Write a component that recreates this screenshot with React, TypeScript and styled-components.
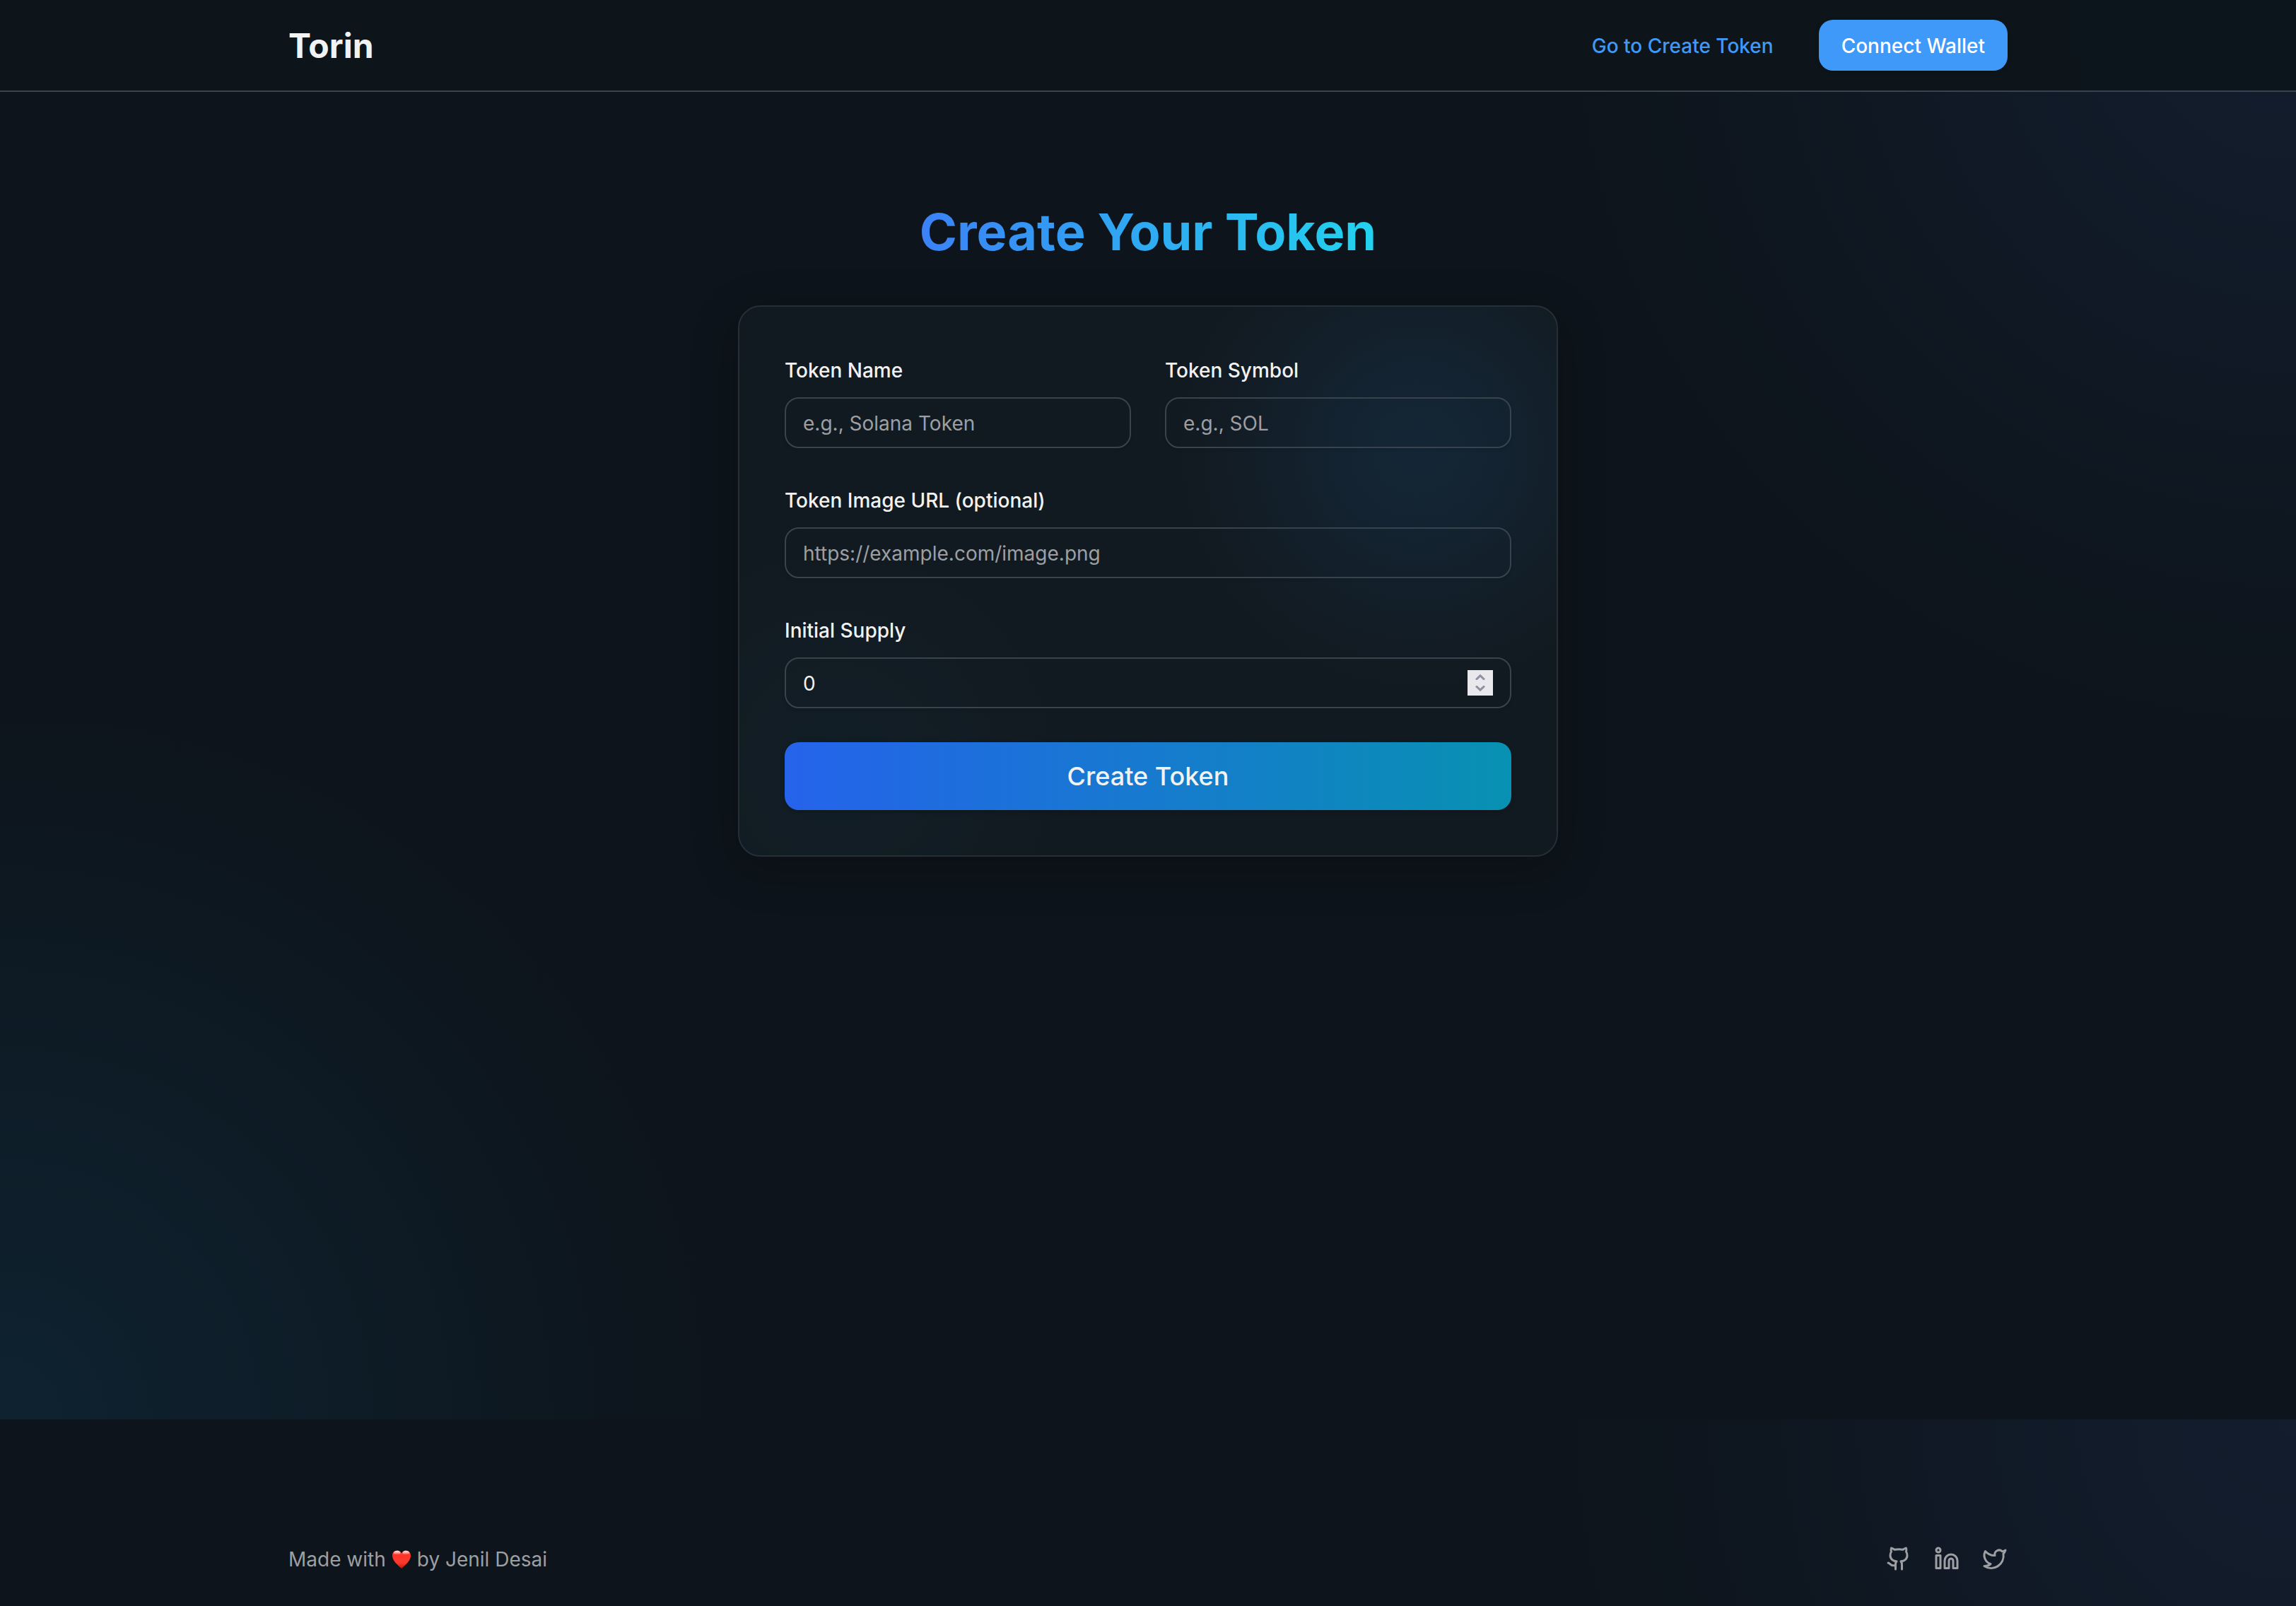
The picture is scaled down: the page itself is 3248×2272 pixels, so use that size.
import React, { useState } from "react";
import styled, { createGlobalStyle } from "styled-components";
import { Github, Linkedin, Twitter } from "lucide-react";

const color = {
  base: "#0d141b",
  text: "#f2f2f2",
  muted: "#9d9fa2",
  line: "#39434d",
  accent: "#3f99f8",
};

const cornerGlow =
  "radial-gradient(circle 1040px at 100% 0, rgba(75, 120, 235, 0.09), rgba(75, 120, 235, 0))";

const GlobalStyle = createGlobalStyle`
  *, *::before, *::after { box-sizing: border-box; }
  body {
    margin: 0;
    background: ${color.base};
    color: ${color.text};
    font-family: Inter, "Liberation Sans", sans-serif;
    font-size: 28px;
    line-height: 40px;
  }
  button, input { font: inherit; color: inherit; }
`;

const Page = styled.div`
  min-height: 100vh;
  display: flex;
  flex-direction: column;
`;

const Upper = styled.div`
  flex: 1;
  display: flex;
  flex-direction: column;
  background:
    ${cornerGlow},
    radial-gradient(circle 1040px at 0 100%, rgba(25, 155, 225, 0.11), rgba(25, 155, 225, 0));
`;

const Header = styled.header`
  background: rgba(13, 21, 27, 0.9);
  border-bottom: 2px solid ${color.line};
`;

const Container = styled.div`
  width: 100%;
  max-width: 2560px;
  margin: 0 auto;
  padding: 0 64px;
  display: flex;
  align-items: center;
  justify-content: space-between;
`;

const HeaderRow = styled(Container)`
  height: 128px;
`;

const Logo = styled.a`
  padding-top: 2px;
  font-size: 48px;
  line-height: 56px;
  font-weight: 700;
  color: ${color.text};
  text-decoration: none;
`;

const Nav = styled.nav`
  display: flex;
  align-items: center;
  gap: 64px;
`;

const NavLink = styled.a`
  padding-top: 2px;
  color: ${color.accent};
  font-weight: 500;
  text-decoration: none;
`;

const WalletButton = styled.button`
  height: 72px;
  padding: 2px 32px 0;
  border: 0;
  border-radius: 20px;
  background: ${color.accent};
  color: #fff;
  font-weight: 500;
  box-shadow: 0 2px 6px rgba(0, 0, 0, 0.2);
  cursor: pointer;
`;

const Main = styled.main`
  display: flex;
  flex-direction: column;
  align-items: center;
  gap: 64px;
  padding: 158px 64px 128px;
`;

const Title = styled.h1`
  margin: 0;
  font-size: 72px;
  line-height: 80px;
  font-weight: 700;
  color: transparent;
  background: linear-gradient(90deg, #3b82f6, #22d3ee);
  background-clip: text;
  -webkit-background-clip: text;
`;

const Card = styled.form`
  width: 100%;
  max-width: 1160px;
  padding: 64px;
  display: grid;
  grid-template-columns: 1fr 1fr;
  gap: 48px;
  border: 2px solid #262e36;
  border-radius: 32px;
  background:
    radial-gradient(circle 340px at 83% 26%, rgba(28, 85, 135, 0.2), rgba(28, 85, 135, 0.13) 45%, rgba(28, 85, 135, 0.03) 80%, rgba(28, 85, 135, 0)),
    radial-gradient(circle 320px at 12% 84%, rgba(6, 75, 95, 0.08), rgba(6, 75, 95, 0.04) 50%, rgba(6, 75, 95, 0)),
    #121a21;
  box-shadow: 0 16px 64px rgba(0, 0, 0, 0.25);
`;

const Field = styled.div<{ $wide?: boolean }>`
  grid-column: ${(p) => (p.$wide ? "1 / -1" : "auto")};
  display: flex;
  flex-direction: column;
  gap: 12px;
`;

const Label = styled.label`
  font-weight: 500;
  line-height: 52px;
`;

const InputBox = styled.div`
  height: 72px;
  padding: 0 24px;
  display: flex;
  align-items: center;
  border: 2px solid ${color.line};
  border-radius: 20px;
  box-shadow: 0 2px 4px rgba(0, 0, 0, 0.12);
`;

const Input = styled.input`
  flex: 1;
  min-width: 0;
  padding: 2px 0 0;
  border: 0;
  outline: 0;
  background: transparent;
  appearance: textfield;
  &::placeholder { color: ${color.muted}; opacity: 1; }
  &::-webkit-inner-spin-button { display: none; }
`;

const Stepper = styled.div`
  width: 36px;
  display: flex;
  flex-direction: column;
  background: #e9e8ed;
`;

const StepButton = styled.button<{ $down?: boolean }>`
  height: 18px;
  padding: ${(p) => (p.$down ? "4px 0 0" : "6px 0 0")};
  border: 0;
  background: none;
  display: flex;
  justify-content: center;
  align-items: flex-start;
  svg { display: block; }
`;

const Submit = styled.button`
  grid-column: 1 / -1;
  height: 96px;
  border: 0;
  border-radius: 20px;
  background: linear-gradient(90deg, #2563eb, #0891b2);
  color: ${color.text};
  font-size: 36px;
  font-weight: 500;
  box-shadow: 0 2px 6px rgba(0, 0, 0, 0.2);
  cursor: pointer;
`;

const Footer = styled.footer`
  padding: 176px 0 46px;
  background: ${cornerGlow};
  color: ${color.muted};
`;

const Credit = styled.p`
  margin: 0;
  padding-top: 2px;
  display: flex;
  align-items: center;
  gap: 8px;
`;

const Socials = styled.div`
  display: flex;
  gap: 32px;
`;

const SocialLink = styled.a`
  color: inherit;
  height: 36px;
  svg { display: block; }
`;

const Heart = () => (
  <svg width="28" height="28" viewBox="1 0 28 28" role="img" aria-label="love">
    <defs>
      <linearGradient id="heartFill" x1="0" y1="0" x2="0" y2="1">
        <stop offset="0" stopColor="#ff7a70" />
        <stop offset="0.25" stopColor="#ff3327" />
        <stop offset="0.7" stopColor="#fb3a2c" />
        <stop offset="1" stopColor="#c8140c" />
      </linearGradient>
      <linearGradient id="heartShine" x1="0" y1="0" x2="0" y2="1">
        <stop offset="0" stopColor="#fff" stopOpacity="0.85" />
        <stop offset="1" stopColor="#fff" stopOpacity="0" />
      </linearGradient>
    </defs>
    <path
      fill="url(#heartFill)"
      d="M15 5.6C13.8 3 11.6 1.4 8.8 1.4 4.9 1.4 2 4.5 2 8.6c0 7.2 6.3 12.4 11.8 17.3.8.7 1.6.7 2.4 0C21.7 21 28 15.8 28 8.6c0-4.1-2.9-7.2-6.8-7.2-2.8 0-5 1.6-6.2 4.2Z"
    />
    <ellipse cx="8.8" cy="4.8" rx="4.6" ry="2.8" fill="url(#heartShine)" />
    <ellipse cx="21.2" cy="4.8" rx="4.6" ry="2.8" fill="url(#heartShine)" />
  </svg>
);

const Chevron = ({ d }: { d: string }) => (
  <svg width="14" height="8" viewBox="0 0 14 8" fill="none" stroke="#9190a0" strokeWidth="3">
    <path d={d} />
  </svg>
);

export default function App() {
  const [supply, setSupply] = useState(0);

  return (
    <>
      <GlobalStyle />
      <Page>
        <Upper>
          <Header>
            <HeaderRow>
              <Logo href="#">Torin</Logo>
              <Nav>
                <NavLink href="#create">Go to Create Token</NavLink>
                <WalletButton type="button">Connect Wallet</WalletButton>
              </Nav>
            </HeaderRow>
          </Header>
          <Main>
            <Title>Create Your Token</Title>
            <Card id="create" onSubmit={(e) => e.preventDefault()}>
              <Field>
                <Label htmlFor="name">Token Name</Label>
                <InputBox>
                  <Input id="name" type="text" placeholder="e.g., Solana Token" />
                </InputBox>
              </Field>
              <Field>
                <Label htmlFor="symbol">Token Symbol</Label>
                <InputBox>
                  <Input id="symbol" type="text" placeholder="e.g., SOL" />
                </InputBox>
              </Field>
              <Field $wide>
                <Label htmlFor="image">Token Image URL (optional)</Label>
                <InputBox>
                  <Input id="image" type="url" placeholder="https://example.com/image.png" />
                </InputBox>
              </Field>
              <Field $wide>
                <Label htmlFor="supply">Initial Supply</Label>
                <InputBox>
                  <Input
                    id="supply"
                    type="number"
                    value={supply}
                    onChange={(e) => setSupply(Number(e.target.value))}
                  />
                  <Stepper>
                    <StepButton type="button" aria-label="Increase supply" onClick={() => setSupply(supply + 1)}>
                      <Chevron d="M1 7.5 7 1.8l6 5.7" />
                    </StepButton>
                    <StepButton $down type="button" aria-label="Decrease supply" onClick={() => setSupply(supply - 1)}>
                      <Chevron d="M1 .5l6 5.7L13 .5" />
                    </StepButton>
                  </Stepper>
                </InputBox>
              </Field>
              <Submit type="submit">Create Token</Submit>
            </Card>
          </Main>
        </Upper>
        <Footer>
          <Container>
            <Credit>
              <span>Made with</span>
              <Heart />
              <span>by Jenil Desai</span>
            </Credit>
            <Socials>
              <SocialLink href="#github" aria-label="GitHub"><Github size={36} /></SocialLink>
              <SocialLink href="#linkedin" aria-label="LinkedIn"><Linkedin size={36} /></SocialLink>
              <SocialLink href="#twitter" aria-label="Twitter"><Twitter size={36} /></SocialLink>
            </Socials>
          </Container>
        </Footer>
      </Page>
    </>
  );
}
